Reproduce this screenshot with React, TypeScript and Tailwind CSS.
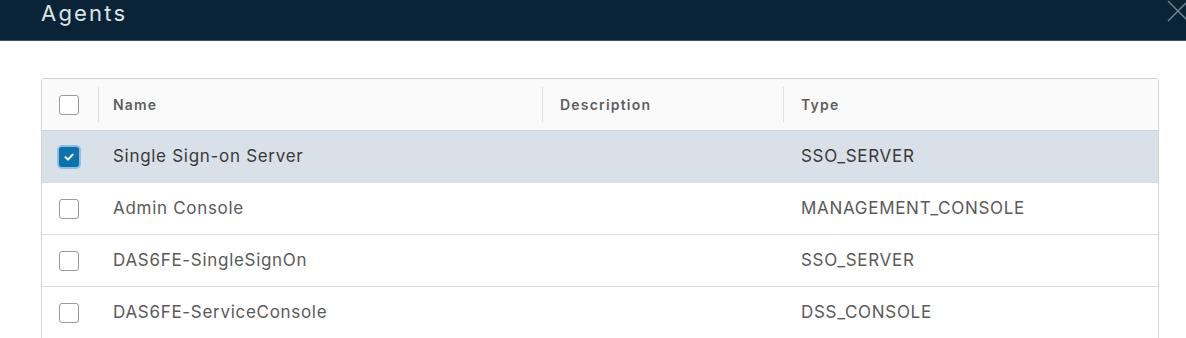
import { useState } from "react"

const rows = [
  { name: "Single Sign-on Server", description: "", type: "SSO_SERVER" },
  { name: "Admin Console", description: "", type: "MANAGEMENT_CONSOLE" },
  { name: "DAS6FE-SingleSignOn", description: "", type: "SSO_SERVER" },
  { name: "DAS6FE-ServiceConsole", description: "", type: "DSS_CONSOLE" },
]

function Checkbox({ checked, onChange }: { checked: boolean; onChange: () => void }) {
  return (
    <button
      type="button"
      onClick={onChange}
      className={
        checked
          ? "flex h-[20px] w-[20px] items-center justify-center rounded-[3px] bg-[#0a72ad] shadow-[0_0_0_2px_rgba(82,160,222,0.55)]"
          : "flex h-[20px] w-[20px] items-center justify-center rounded-[3px] border border-[#9a9a9a] bg-white"
      }
    >
      {checked && (
        <svg width="12" height="12" viewBox="0 0 12 12" fill="none">
          <path d="M2.5 6.2 L5 8.6 L9.6 3.6" stroke="white" strokeWidth="2" strokeLinecap="round" strokeLinejoin="round" />
        </svg>
      )}
    </button>
  )
}

export default function App() {
  const [selected, setSelected] = useState<boolean[]>([true, false, false, false])

  const toggle = (i: number) => {
    setSelected((prev) => prev.map((v, j) => (j === i ? !v : v)))
  }

  return (
    <div className="h-[338px] w-[1186px] overflow-hidden bg-white font-['Inter',sans-serif]">
      <div className="relative flex h-[41px] items-start border-b border-[#3d5567] bg-[#0a2437] pl-[41px]">
        <h1 className="text-[22px] leading-[27px] tracking-[2.2px] text-[#dfe3e6]">Agents</h1>
        <button type="button" className="absolute right-[-5px] top-[-2px] text-[#74838e]">
          <svg width="26" height="26" viewBox="0 0 26 26" fill="none">
            <path d="M3 3 L23 23 M23 3 L3 23" stroke="currentColor" strokeWidth="1.4" />
          </svg>
        </button>
      </div>

      <div className="ml-[41px] mr-[27px] mt-[37px] rounded-t-[3px] border border-b-0 border-[#d4d4d4]">
        <div className="flex h-[51px] items-center bg-[#fafafa] text-[14px] font-semibold tracking-[1.2px] text-[#5e5e5e]">
          <div className="flex w-[56px] items-center pl-[17px]">
            <Checkbox
              checked={selected.every(Boolean)}
              onChange={() => setSelected((prev) => prev.map(() => !prev.every(Boolean)))}
            />
          </div>
          <div className="flex h-[35px] w-[444px] items-center border-l border-[#e0e0e0] pl-[14px]">Name</div>
          <div className="flex h-[35px] w-[241px] items-center border-l border-[#e0e0e0] pl-[17px]">Description</div>
          <div className="flex h-[35px] flex-1 items-center border-l border-[#e0e0e0] pl-[17px]">Type</div>
        </div>
        {rows.map((row, i) => (
          <div
            key={row.name}
            className={
              selected[i]
                ? "flex h-[52px] items-center border-t border-[#d4d4d4] bg-[#d9e1e8] text-[17px] tracking-[0.7px] text-[#3a3a3a]"
                : "flex h-[52px] items-center border-t border-[#dcdcdc] bg-white text-[17px] tracking-[0.7px] text-[#5a5a5a]"
            }
          >
            <div className="flex w-[56px] items-center pl-[17px]">
              <Checkbox checked={selected[i]} onChange={() => toggle(i)} />
            </div>
            <div className="w-[444px] pl-[15px]">{row.name}</div>
            <div className="w-[241px] pl-[17px]">{row.description}</div>
            <div className="flex-1 pl-[18px]">{row.type}</div>
          </div>
        ))}
      </div>
    </div>
  )
}
